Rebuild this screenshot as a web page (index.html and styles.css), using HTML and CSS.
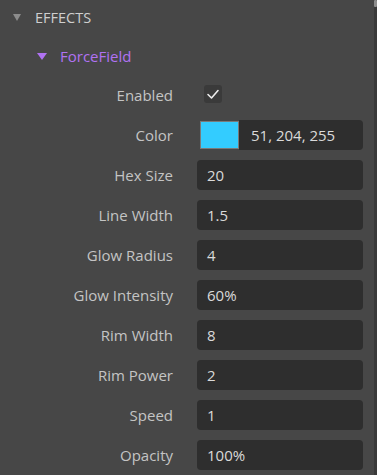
FILE: index.html
```html
<!DOCTYPE html>
<html>
<head>
<meta charset="utf-8">
<link rel="stylesheet" href="styles.css">
</head>
<body>
<div class="panel">
  <div class="content">
    <div class="section-header">
      <span class="tri tri-gray"></span>
      <span class="section-title">EFFECTS</span>
    </div>
    <div class="group-header">
      <span class="tri tri-purple"></span>
      <span class="group-title">ForceField</span>
    </div>
    <div class="props">
      <div class="label">Enabled</div>
      <div class="field-plain">
        <svg class="check" width="18" height="18" viewBox="0 0 18 18">
          <rect x="0" y="0" width="18" height="18" rx="3" fill="#3a3a3a"/>
          <polyline points="4,9.5 7.5,13 14,5.5" fill="none" stroke="#ececec" stroke-width="1.6" stroke-linecap="round" stroke-linejoin="round"/>
        </svg>
      </div>

      <div class="label">Color</div>
      <div class="color-field">
        <span class="swatch"></span>
        <span class="color-value">51, 204, 255</span>
      </div>

      <div class="label">Hex Size</div>
      <div class="input">20</div>

      <div class="label">Line Width</div>
      <div class="input">1.5</div>

      <div class="label">Glow Radius</div>
      <div class="input">4</div>

      <div class="label">Glow Intensity</div>
      <div class="input">60%</div>

      <div class="label">Rim Width</div>
      <div class="input">8</div>

      <div class="label">Rim Power</div>
      <div class="input">2</div>

      <div class="label">Speed</div>
      <div class="input">1</div>

      <div class="label">Opacity</div>
      <div class="input">100%</div>
    </div>
  </div>
  <div class="scrollbar"><div class="thumb"></div></div>
</div>
</body>
</html>
```

FILE: styles.css
```css
html, body {
  margin: 0;
  padding: 0;
  background: #474747;
}
body {
  font-family: "Open Sans", "Noto Sans", sans-serif;
  font-size: 15px;
  color: #cfcfcf;
  width: 377px;
  height: 475px;
  overflow: hidden;
}
.panel {
  display: flex;
  height: 475px;
}
.content {
  flex: 1;
}
.section-header {
  height: 34px;
  display: flex;
  align-items: center;
  padding-left: 13px;
  gap: 14px;
}
.tri {
  width: 0;
  height: 0;
  border-left: 4.5px solid transparent;
  border-right: 4.5px solid transparent;
  border-top: 7px solid #8c8c8c;
}
.tri-purple {
  border-top-color: #b072f2;
  border-left-width: 5px;
  border-right-width: 5px;
  border-top-width: 7px;
}
.section-title {
  color: #cfcfcf;
  font-size: 14.5px;
}
.group-header {
  height: 36px;
  margin-top: 4px;
  display: flex;
  align-items: center;
  padding-left: 37px;
  gap: 13px;
}
.group-title {
  color: #b072f2;
  font-size: 15px;
}
.props {
  display: grid;
  grid-template-columns: 173px 166px;
  column-gap: 24px;
  row-gap: 10px;
  grid-auto-rows: 30px;
  padding-top: 6px;
}
.label {
  text-align: right;
  display: flex;
  align-items: center;
  justify-content: flex-end;
  color: #c4c4c4;
}
.field-plain {
  display: flex;
  align-items: center;
  padding-left: 7px;
}
.check {
  display: block;
  margin-top: -2px;
}
.input {
  background: #2e2e2e;
  border-radius: 4px;
  display: flex;
  align-items: center;
  padding-left: 10px;
  color: #dadada;
}
.color-field {
  display: flex;
  align-items: center;
}
.swatch {
  width: 37px;
  height: 26px;
  margin-left: 3px;
  background: #33ccff;
  border: 1px solid #7a7a7a;
}
.color-value {
  flex: 1;
  height: 30px;
  background: #2e2e2e;
  border-radius: 0 4px 4px 0;
  display: flex;
  align-items: center;
  padding-left: 12px;
  box-sizing: border-box;
  color: #dadada;
}
.scrollbar {
  width: 3px;
  background: #3a3a3a;
}
.thumb {
  height: 7px;
  background: #8e8e8e;
  border-radius: 1px;
}
```
